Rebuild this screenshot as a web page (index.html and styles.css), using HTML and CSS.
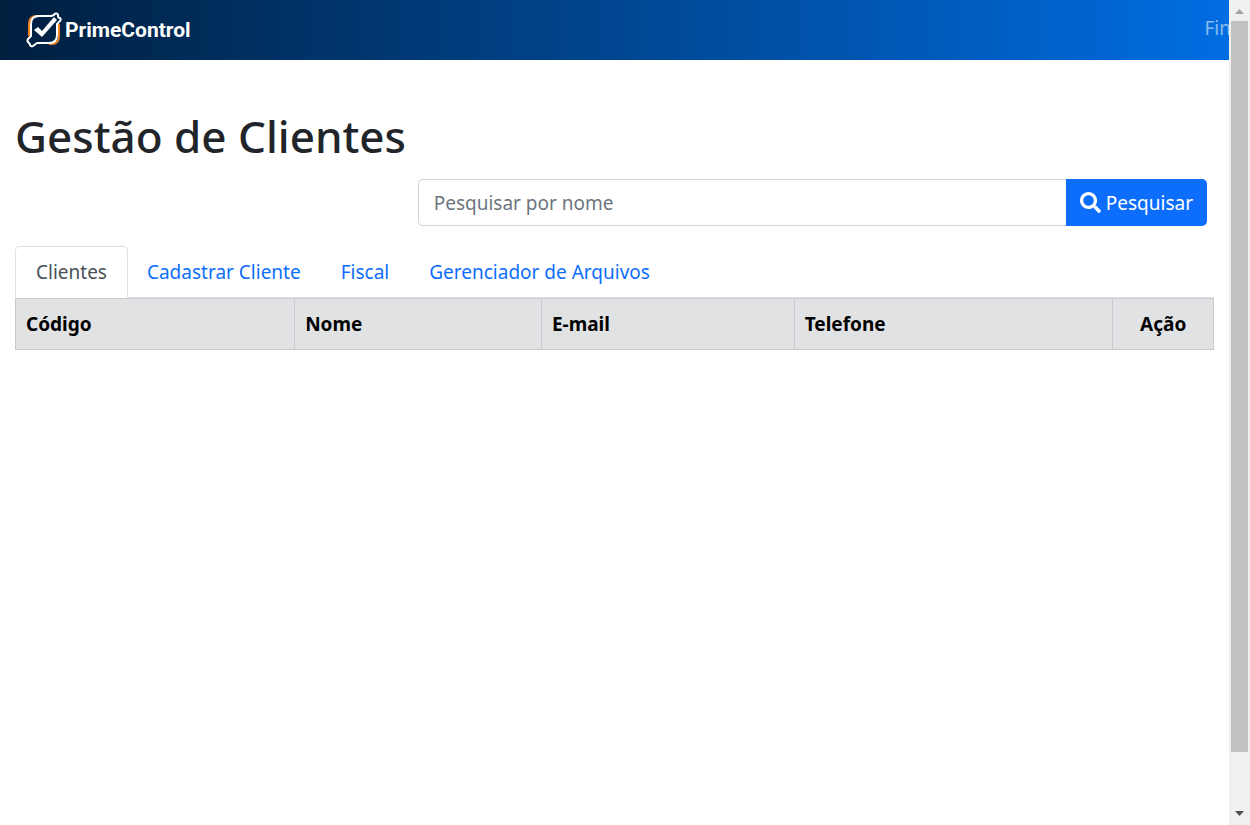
FILE: index.html
```html
<!DOCTYPE html>
<html lang="pt-BR">
<head>
<meta charset="utf-8">
<title>Gestão de Clientes</title>
<link rel="stylesheet" href="styles.css">
</head>
<body>
<div class="page">
  <header class="navbar">
    <a class="brand" href="#">
      <svg class="brand-mark" viewBox="0 0 36 36" width="36" height="36" fill="none" aria-hidden="true">
        <path d="M3 24V12q0-8 8-8h14" stroke="#f58220" stroke-width="2"/>
        <path d="M33 12v12q0 8-8 8h-2" stroke="#f58220" stroke-width="2"/>
        <path d="M25 4H13q-8 0-8 8v12l-3 3a3 3 0 0 0 1 4q1 1 1 2a2 2 0 0 0 3 1l4-3h12q8 0 8-8V12l3-3a2 2 0 0 0 0-3q-2 0-2-2a2 2 0 0 0-4-1z" stroke="#fff" stroke-width="2" stroke-linejoin="round"/>
        <path d="M8 18l4-3 4 4L28 5l3 3-15 17z" fill="#fff"/>
      </svg>
      <span>PrimeControl</span>
    </a>
    <nav class="menu"><a href="#">Fin</a></nav>
  </header>
  <main class="content">
    <h1>Gestão de Clientes</h1>
    <form class="search">
      <input type="search" placeholder="Pesquisar por nome" aria-label="Pesquisar por nome">
      <button type="button">
        <svg viewBox="0 0 512 512" width="21" height="21" fill="currentColor" aria-hidden="true"><path d="M505 442.700L405.300 343c-4.500-4.500-10.600-7-17-7H372c27.600-35.300 44-79.700 44-128C416 93.100 322.900 0 208 0S0 93.100 0 208s93.100 208 208 208c48.300 0 92.700-16.400 128-44v16.300c0 6.400 2.500 12.500 7 17l99.700 99.700c9.400 9.400 24.600 9.400 33.900 0l28.300-28.300c9.400-9.400 9.400-24.600.1-34zM208 336c-70.700 0-128-57.200-128-128 0-70.700 57.200-128 128-128 70.700 0 128 57.200 128 128 0 70.700-57.200 128-128 128z"/></svg>
        <span>Pesquisar</span>
      </button>
    </form>
    <nav class="tabs">
      <a class="tab active" href="#">Clientes</a>
      <a class="tab" href="#">Cadastrar Cliente</a>
      <a class="tab" href="#">Fiscal</a>
      <a class="tab" href="#">Gerenciador de Arquivos</a>
    </nav>
    <table class="clients">
      <colgroup><col class="c-code"><col class="c-name"><col class="c-mail"><col class="c-phone"><col class="c-action"></colgroup>
      <thead><tr><th>Código</th><th>Nome</th><th>E-mail</th><th>Telefone</th><th class="center">Ação</th></tr></thead>
    </table>
  </main>
</div>
<div class="scrollbar" aria-hidden="true">
  <svg viewBox="0 0 21 21" width="21" height="21"><path d="M6 14l4.500-5 4.500 5z" fill="#a3a3a3"/></svg>
  <div class="track"><div class="thumb"></div></div>
  <svg viewBox="0 0 21 21" width="21" height="21"><path d="M6 7h9l-4.500 5z" fill="#505050"/></svg>
</div>
</body>
</html>
```
FILE: styles.css
```css
* { box-sizing: border-box; }
body {
  margin: 0;
  height: 100vh;
  display: flex;
  overflow: hidden;
  background: #fff;
  color: #212529;
  font-family: "Segoe UI", "Noto Sans", sans-serif;
  font-size: 19px;
  line-height: 30px;
}
a { text-decoration: none; }
.page { flex: 1; min-width: 0; overflow: hidden; }

.navbar {
  height: 60px;
  display: flex;
  align-items: center;
  justify-content: space-between;
  padding-left: 26px;
  background: linear-gradient(to right, #001f3f, #006de2);
}
.brand {
  display: flex;
  align-items: center;
  gap: 3px;
  color: #fff;
  font-family: Roboto, sans-serif;
  font-size: 21px;
  font-weight: 700;
}
.brand-mark { display: block; }
.menu { padding-bottom: 4px; margin-right: -2px; }
.menu a { color: rgba(255, 255, 255, .55); }

.content { padding: 48px 15px 0; }
h1 {
  margin: 0 0 15px;
  font-size: 44px;
  font-weight: 500;
  line-height: 56px;
}
.search {
  display: flex;
  width: 66%;
  margin: 0 7px 20px auto;
  padding-left: 2px;
}
.search input {
  flex: 1;
  min-width: 0;
  height: 47px;
  padding: 6px 15px;
  border: 1px solid #ced4da;
  border-right: 0;
  border-radius: 5px 0 0 5px;
  font: inherit;
  color: inherit;
  appearance: none;
}
.search input::placeholder { color: #6c757d; opacity: 1; }
.search button {
  display: flex;
  align-items: center;
  gap: 5px;
  padding: 0 14px;
  border: 0;
  border-radius: 0 5px 5px 0;
  background: #0d6efd;
  color: #fff;
  font: inherit;
}
.tabs {
  display: flex;
  border-bottom: 1px solid #dee2e6;
}
.tab {
  padding: 10px 20px;
  margin-bottom: -1px;
  border: 1px solid transparent;
  border-radius: 5px 5px 0 0;
  color: #0d6efd;
}
.tab + .tab { margin-left: -2px; }
.tab.active {
  border-color: #dee2e6 #dee2e6 #fff;
  background: #fff;
  color: #495057;
}
.clients {
  width: 100%;
  table-layout: fixed;
  border-collapse: collapse;
  color: #000;
}
.clients th {
  padding: 10px;
  border: 1px solid #c9cbce;
  background: #e0e2e4;
  font-weight: 700;
  text-align: left;
}
.clients th.center { text-align: center; }
.c-code { width: 23.300%; }
.c-name { width: 20.600%; }
.c-mail { width: 21.100%; }
.c-phone { width: 26.600%; }
.c-action { width: 8.400%; }

.scrollbar {
  width: 21px;
  display: flex;
  flex-direction: column;
  background: #f0f0f0;
}
.scrollbar svg { display: block; }
.track { flex: 1; padding: 0 2px; }
.thumb { height: 93.400%; background: #c1c1c1; }
```
